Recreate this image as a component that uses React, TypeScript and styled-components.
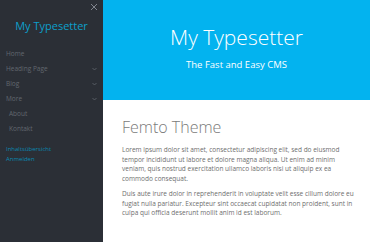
import React from "react";
import styled, { createGlobalStyle } from "styled-components";

const GlobalStyle = createGlobalStyle`
  html, body {
    margin: 0;
    padding: 0;
    background: #ffffff;
  }
  body {
    font-family: "Open Sans", "Noto Sans", sans-serif;
  }
`;

const Page = styled.div`
  display: flex;
  width: 370px;
  height: 242px;
  overflow: hidden;
`;

const Sidebar = styled.nav`
  position: relative;
  width: 103px;
  flex-shrink: 0;
  background: #2b2f36;
  display: flex;
  flex-direction: column;
`;

const Close = styled.button`
  position: absolute;
  top: 2px;
  right: 4px;
  width: 10px;
  height: 10px;
  padding: 0;
  border: none;
  background: none;
  display: flex;
  align-items: center;
  justify-content: center;
`;

const Brand = styled.div`
  color: #0b9fcb;
  font-size: 11px;
  text-align: center;
  padding: 18px 0 0;
  height: 46px;
  box-sizing: border-box;
`;

const Menu = styled.ul`
  list-style: none;
  margin: 0;
  padding: 0;
`;

const Item = styled.li<{ $sub?: boolean }>`
  display: flex;
  align-items: center;
  justify-content: space-between;
  height: 15px;
  padding: 0 6px 0 ${({ $sub }) => ($sub ? "9px" : "6px")};
  color: #62676f;
  font-size: 6.5px;
`;

const Chevron = styled.svg`
  width: 5px;
  height: 4px;
`;

const Links = styled.div`
  display: flex;
  flex-direction: column;
  gap: 2px;
  padding: 9px 6px 0;
`;

const Link = styled.a`
  color: #0a89b1;
  font-size: 6px;
  text-decoration: none;
`;

const Main = styled.main`
  flex: 1;
  display: flex;
  flex-direction: column;
`;

const Hero = styled.header`
  height: 100px;
  background: #03b3ef;
  color: #ffffff;
  display: flex;
  flex-direction: column;
  align-items: center;
  padding-top: 24px;
  box-sizing: border-box;
`;

const HeroTitle = styled.h1`
  margin: 0;
  font-size: 21px;
  font-weight: 300;
  line-height: 26px;
`;

const HeroSub = styled.p`
  margin: 8px 0 0;
  font-size: 9.5px;
  font-weight: 400;
`;

const Content = styled.section`
  padding: 17px 12px 0 19px;
  color: #6e6e6e;
`;

const Heading = styled.h2`
  margin: 0 0 8px;
  font-size: 16px;
  font-weight: 300;
  line-height: 20px;
  color: #7a7a7a;
`;

const Para = styled.p`
  margin: 0 0 6px;
  font-size: 6.5px;
  line-height: 9.5px;
`;

const ChevronIcon = () => (
  <Chevron viewBox="0 0 5 4">
    <path d="M0.5 1 L2.5 3 L4.5 1" stroke="#62676f" strokeWidth="0.8" fill="none" />
  </Chevron>
);

const menu = [
  { label: "Home" },
  { label: "Heading Page", more: true },
  { label: "Blog", more: true },
  { label: "More", more: true },
  { label: "About", sub: true },
  { label: "Kontakt", sub: true },
];

export default function App() {
  return (
    <>
      <GlobalStyle />
      <Page>
        <Sidebar>
          <Close aria-label="close">
            <svg width="8" height="8" viewBox="0 0 8 8">
              <path d="M1 1 L7 7 M7 1 L1 7" stroke="#8a8f97" strokeWidth="0.9" />
            </svg>
          </Close>
          <Brand>My Typesetter</Brand>
          <Menu>
            {menu.map((m) => (
              <Item key={m.label} $sub={m.sub}>
                <span>{m.label}</span>
                {m.more && <ChevronIcon />}
              </Item>
            ))}
          </Menu>
          <Links>
            <Link href="#">Inhaltsübersicht</Link>
            <Link href="#">Anmelden</Link>
          </Links>
        </Sidebar>
        <Main>
          <Hero>
            <HeroTitle>My Typesetter</HeroTitle>
            <HeroSub>The Fast and Easy CMS</HeroSub>
          </Hero>
          <Content>
            <Heading>Femto Theme</Heading>
            <Para>
              Lorem ipsum dolor sit amet, consectetur adipiscing elit, sed do eiusmod
              tempor incididunt ut labore et dolore magna aliqua. Ut enim ad minim
              veniam, quis nostrud exercitation ullamco laboris nisi ut aliquip ex ea
              commodo consequat.
            </Para>
            <Para>
              Duis aute irure dolor in reprehenderit in voluptate velit esse cillum dolore eu
              fugiat nulla pariatur. Excepteur sint occaecat cupidatat non proident, sunt in
              culpa qui officia deserunt mollit anim id est laborum.
            </Para>
          </Content>
        </Main>
      </Page>
    </>
  );
}
